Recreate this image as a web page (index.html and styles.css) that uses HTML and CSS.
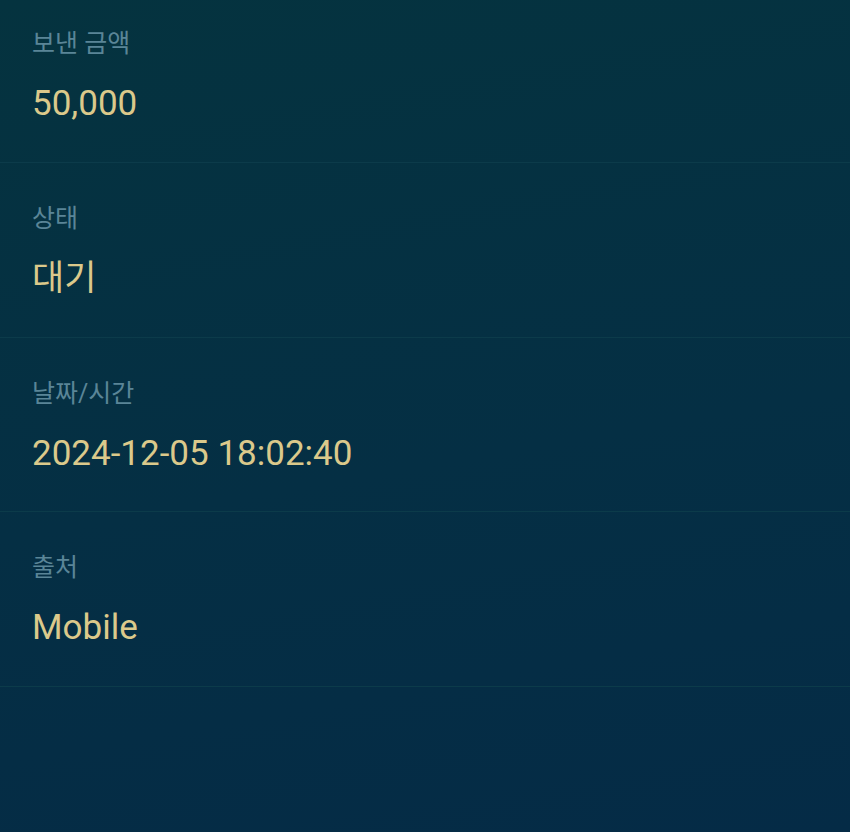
FILE: index.html
```html
<!DOCTYPE html>
<html lang="ko">
<head>
<meta charset="UTF-8" />
<meta name="viewport" content="width=device-width, initial-scale=1" />
<title>거래 상세</title>
<link rel="stylesheet" href="styles.css">
</head>
<body>

<div class="detail-list">
  <div class="detail-row first">
    <div class="detail-label">보낸 금액</div>
    <div class="detail-value">50,000</div>
  </div>
  <div class="detail-row">
    <div class="detail-label">상태</div>
    <div class="detail-value">대기</div>
  </div>
  <div class="detail-row">
    <div class="detail-label">날짜/시간</div>
    <div class="detail-value">2024-12-05 18:02:40</div>
  </div>
  <div class="detail-row">
    <div class="detail-label">출처</div>
    <div class="detail-value">Mobile</div>
  </div>
</div>

</body>
</html>
```

FILE: styles.css
```css
html {
  height: 100%;
}
body {
  font-family: Roboto, "Noto Sans CJK KR", sans-serif;
  background: linear-gradient(170deg, #05333f 0%, #052f44 55%, #052b46 100%);
  margin: 0;
  padding: 0;
  min-height: 100vh;
  overflow: hidden;
}
.detail-list {
  display: flex;
  flex-direction: column;
}
.detail-row {
  display: flex;
  flex-direction: column;
  gap: 18px;
  padding: 36px 32px 35.7px;
  border-bottom: 1px solid #0c3b4a;
}
.detail-row.first {
  padding-top: 24.3px;
}
.detail-label {
  font-size: 25px;
  line-height: 40px;
  color: #5a8597;
}
.detail-value {
  font-size: 35px;
  line-height: 44px;
  color: #dbc98b;
}
```
